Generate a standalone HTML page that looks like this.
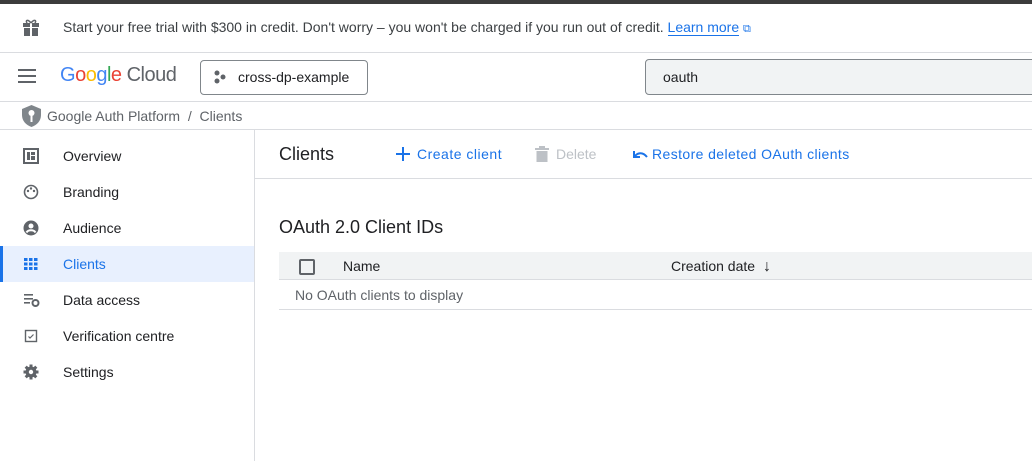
<!DOCTYPE html>
<html><head><meta charset="utf-8"><style>
*{box-sizing:border-box;margin:0;padding:0}
body{width:1032px;height:461px;overflow:hidden;background:#fff;font-family:"Liberation Sans",Roboto,sans-serif;color:#202124;position:relative}
.abs{position:absolute}
.hl{position:absolute;left:0;right:0;height:1px;background:#dadce0}
.nav{position:absolute;left:0;width:254px;height:36px;font-size:14px;line-height:36px}
.nav span{position:absolute;left:63px}
.nav svg{position:absolute;left:23px;top:10px}
.blue{color:#1a73e8}
</style></head><body>
<div class="abs" style="left:0;top:0;width:1032px;height:4px;background:#3c3c3c"></div>
<svg class="abs" style="left:22px;top:19px" width="18" height="18" viewBox="0 0 18 18"><rect x="1" y="4" width="16" height="4" fill="#5f6368"/><rect x="2" y="9" width="14" height="8" fill="#5f6368"/><rect x="8" y="4" width="2" height="13" fill="#fff"/><path d="M9 4 C6 0 3 1 5 4 M9 4 C12 0 15 1 13 4" stroke="#5f6368" stroke-width="1.5" fill="none"/></svg>
<div class="abs" style="left:63px;top:19px;font-size:14px;color:#3c4043">Start your free trial with $300 in credit. Don't worry – you won't be charged if you run out of credit. <span class="blue" style="border-bottom:1px solid #1a73e8">Learn more</span> <span class="blue" style="font-size:11px">⧉</span></div>
<div class="hl" style="top:52px"></div>
<svg class="abs" style="left:18px;top:69px" width="18" height="14"><rect y="0" width="18" height="2" fill="#5f6368"/><rect y="6" width="18" height="2" fill="#5f6368"/><rect y="12" width="18" height="2" fill="#5f6368"/></svg>
<div class="abs" style="left:60px;top:64px;font-size:20px;letter-spacing:-0.5px"><span style="color:#4285f4">G</span><span style="color:#ea4335">o</span><span style="color:#fbbc04">o</span><span style="color:#4285f4">g</span><span style="color:#34a853">l</span><span style="color:#ea4335">e</span> <span style="color:#5f6368">Cloud</span></div>
<div class="abs" style="left:200px;top:60px;width:168px;height:35px;border:1px solid #80868b;border-radius:4px"></div>
<svg class="abs" style="left:213px;top:70px" width="14" height="14"><circle cx="4" cy="3" r="2.5" fill="#5f6368"/><circle cx="10" cy="7" r="2.5" fill="#5f6368"/><circle cx="4" cy="11" r="2.5" fill="#5f6368"/></svg>
<div class="abs" style="left:238px;top:69px;font-size:14px">cross-dp-example</div>
<div class="abs" style="left:645px;top:59px;width:400px;height:36px;border:1px solid #80868b;border-radius:4px;background:#f1f3f4"></div>
<div class="abs" style="left:663px;top:69px;font-size:14px">oauth</div>
<div class="hl" style="top:101px"></div>
<svg class="abs" style="left:22px;top:105px" width="19" height="22" viewBox="0 0 19 22"><path d="M9.5 0 L19 4 V10 C19 16 15 20 9.5 22 C4 20 0 16 0 10 V4 Z" fill="#80868b"/><circle cx="9.5" cy="8" r="3" fill="#fff"/><rect x="8.5" y="10" width="2" height="7" fill="#fff"/></svg>
<div class="abs" style="left:47px;top:108px;font-size:14px;color:#5f6368">Google Auth Platform &nbsp;/&nbsp; Clients</div>
<div class="hl" style="top:129px"></div>
<div class="abs" style="left:254px;top:130px;width:1px;height:331px;background:#dadce0"></div>
<div class="nav" style="top:138px"><svg width="16" height="16"><rect x="1" y="1" width="14" height="14" fill="none" stroke="#5f6368" stroke-width="2"/><rect x="4" y="4" width="3" height="8" fill="#5f6368"/><rect x="8" y="4" width="4" height="3" fill="#5f6368"/><rect x="8" y="8" width="4" height="4" fill="#5f6368"/></svg><span>Overview</span></div>
<div class="nav" style="top:174px"><svg width="16" height="16"><circle cx="8" cy="8" r="6.5" fill="none" stroke="#5f6368" stroke-width="1.6"/><circle cx="5" cy="7" r="1.2" fill="#5f6368"/><circle cx="8" cy="4.5" r="1.2" fill="#5f6368"/><circle cx="11" cy="7" r="1.2" fill="#5f6368"/></svg><span>Branding</span></div>
<div class="nav" style="top:210px"><svg width="16" height="16"><circle cx="8" cy="8" r="7.5" fill="#5f6368"/><circle cx="8" cy="6" r="2.5" fill="#fff"/><path d="M3.5 12.5 C5 9.5 11 9.5 12.5 12.5" stroke="#fff" stroke-width="2" fill="none"/></svg><span>Audience</span></div>
<div class="nav" style="top:246px;background:#e8f0fe;color:#1a73e8"><div style="position:absolute;left:0;top:0;width:3px;height:36px;background:#1a73e8"></div><svg width="16" height="16" fill="#1a73e8"><rect x="1" y="2" width="3.5" height="3"/><rect x="6" y="2" width="3.5" height="3"/><rect x="11" y="2" width="3.5" height="3"/><rect x="1" y="6.5" width="3.5" height="3"/><rect x="6" y="6.5" width="3.5" height="3"/><rect x="11" y="6.5" width="3.5" height="3"/><rect x="1" y="11" width="3.5" height="3"/><rect x="6" y="11" width="3.5" height="3"/><rect x="11" y="11" width="3.5" height="3"/></svg><span>Clients</span></div>
<div class="nav" style="top:282px"><svg width="17" height="16" fill="#5f6368"><rect x="1" y="2" width="9" height="1.6"/><rect x="1" y="6" width="9" height="1.6"/><rect x="1" y="10" width="6" height="1.6"/><circle cx="12.5" cy="11" r="3" fill="none" stroke="#5f6368" stroke-width="2"/></svg><span>Data access</span></div>
<div class="nav" style="top:318px"><svg width="16" height="16"><rect x="2.5" y="2.5" width="11" height="11" fill="none" stroke="#5f6368" stroke-width="1.4"/><path d="M5.5 8.5 L7 10 L10.5 6.5" stroke="#5f6368" stroke-width="1.2" fill="none"/></svg><span>Verification centre</span></div>
<div class="nav" style="top:354px"><svg width="16" height="16"><circle cx="8" cy="8" r="5.5" fill="#5f6368"/><g stroke="#5f6368" stroke-width="3"><line x1="8" y1="0.5" x2="8" y2="15.5"/><line x1="0.5" y1="8" x2="15.5" y2="8"/><line x1="2.7" y1="2.7" x2="13.3" y2="13.3"/><line x1="13.3" y1="2.7" x2="2.7" y2="13.3"/></g><circle cx="8" cy="8" r="2.2" fill="#fff"/></svg><span>Settings</span></div>
<div class="abs" style="left:279px;top:144px;font-size:18px">Clients</div>
<svg class="abs" style="left:396px;top:147px" width="14" height="14"><rect x="6" y="0" width="2" height="14" fill="#1a73e8"/><rect x="0" y="6" width="14" height="2" fill="#1a73e8"/></svg>
<div class="abs blue" style="left:417px;top:146px;font-size:14px;letter-spacing:0.5px">Create client</div>
<svg class="abs" style="left:535px;top:146px" width="14" height="16"><rect x="0" y="2" width="14" height="2" fill="#bdc1c6"/><rect x="4" y="0" width="6" height="2" fill="#bdc1c6"/><rect x="1.5" y="5" width="11" height="11" fill="#bdc1c6"/></svg>
<div class="abs" style="left:556px;top:146px;font-size:14px;color:#bdc1c6">Delete</div>
<svg class="abs" style="left:632px;top:149px" width="16" height="10"><path d="M2 2 V8 H8 M2 8 C6 3 11 3 15 8" stroke="#1a73e8" stroke-width="2" fill="none"/></svg>
<div class="abs blue" style="left:652px;top:146px;font-size:14px;letter-spacing:0.4px">Restore deleted OAuth clients</div>
<div class="abs" style="left:255px;top:178px;width:777px;height:1px;background:#dadce0"></div>
<div class="abs" style="left:279px;top:217px;font-size:18px">OAuth 2.0 Client IDs</div>
<div class="abs" style="left:279px;top:252px;width:753px;height:28px;background:#f1f3f4;border-bottom:1px solid #dadce0"></div>
<div class="abs" style="left:299px;top:259px;width:16px;height:16px;border:2px solid #5f6368;border-radius:2px"></div>
<div class="abs" style="left:343px;top:258px;font-size:14px">Name</div>
<div class="abs" style="left:671px;top:258px;font-size:14px">Creation date <span style="font-size:16px;margin-left:4px">↓</span></div>
<div class="abs" style="left:295px;top:287px;font-size:14px;color:#5f6368">No OAuth clients to display</div>
<div class="abs" style="left:279px;top:309px;width:753px;height:1px;background:#dadce0"></div>
</body></html>
